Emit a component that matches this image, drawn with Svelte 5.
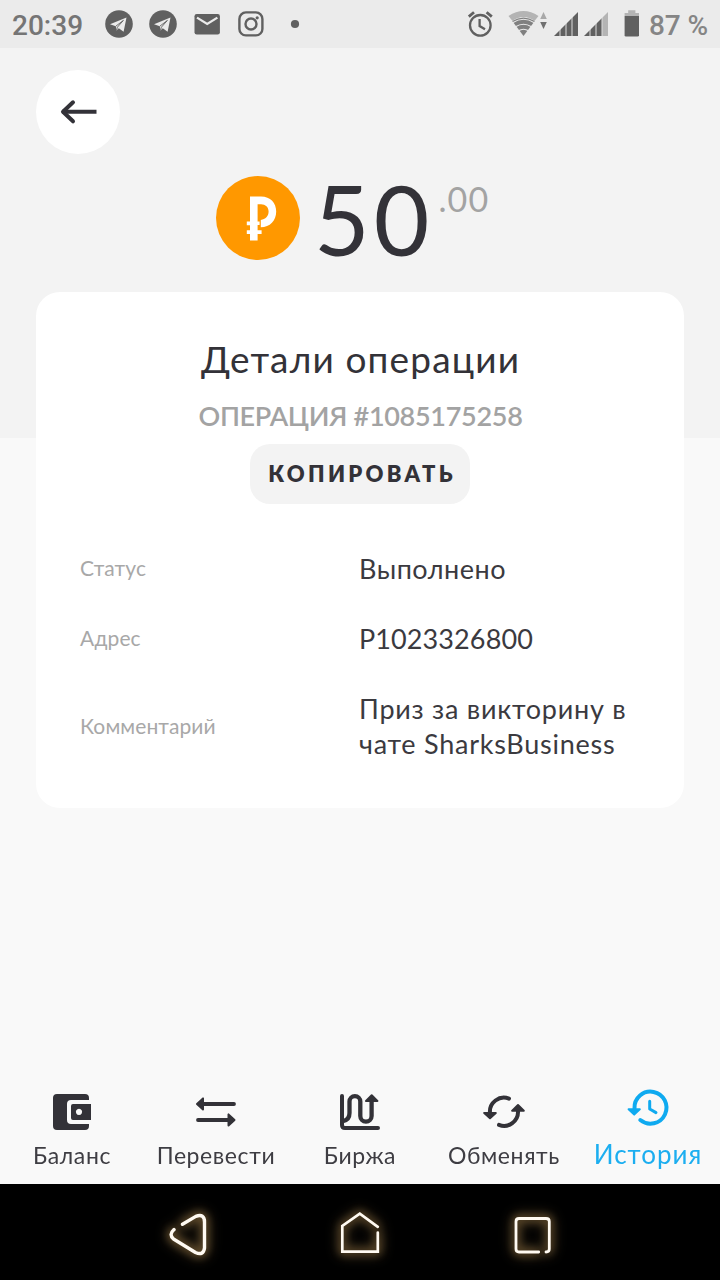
<script lang="ts">
	type Row = { label: string; value: string[]; spacing: number };

	const rows: Row[] = [
		{ label: 'Статус', value: ['Выполнено'], spacing: 0.5 },
		{ label: 'Адрес', value: ['P1023326800'], spacing: 0.1 },
		{ label: 'Комментарий', value: ['Приз за викторину в', 'чате SharksBusiness'], spacing: 0.75 }
	];

	const tabs = [
		{ id: 'balance', title: 'Баланс' },
		{ id: 'transfer', title: 'Перевести' },
		{ id: 'market', title: 'Биржа' },
		{ id: 'exchange', title: 'Обменять' },
		{ id: 'history', title: 'История' }
	];

	let active = 'history';
</script>

<div class="screen">
	<div class="status-bar">
		<span class="time">20:39</span>
		<div class="notifications">
			{#each [0, 1] as i (i)}
				<svg width="28" height="28" viewBox="0 0 28 28">
					<circle cx="14" cy="14" r="13.8" fill="#606060" />
					<path d="M5 14.3 L21.5 7.4 L18.6 21.7 L13.8 18.2 L11.5 20.4 L10.8 16.2 Z" fill="#ebebeb" />
					<path d="M10.8 16.2 L18.4 10.4 L12.4 17.2 L11.6 20" fill="none" stroke="#606060" stroke-width="0.9" />
				</svg>
			{/each}
			<svg width="28" height="28" viewBox="0 0 28 28">
				<rect x="1.5" y="4" width="25.4" height="20.4" rx="2.2" fill="#606060" />
				<path d="M4 7.6 L14.2 14 L24.4 7.6" fill="none" stroke="#ebebeb" stroke-width="2.3" />
			</svg>
			<svg width="28" height="28" viewBox="0 0 28 28">
				<rect x="2.4" y="2.4" width="23" height="23" rx="6.5" fill="none" stroke="#606060" stroke-width="2.4" />
				<circle cx="14" cy="14" r="5.5" fill="none" stroke="#606060" stroke-width="2.4" />
				<circle cx="20.2" cy="7.8" r="1.6" fill="#606060" />
			</svg>
			<svg width="28" height="28" viewBox="0 0 28 28">
				<circle cx="14" cy="14" r="4.1" fill="#606060" />
			</svg>
		</div>
		<div class="indicators">
			<svg width="174" height="30" viewBox="467 9 174 30">
				<g fill="none" stroke="#606060" stroke-width="2.3">
					<circle cx="480.3" cy="25.3" r="10.3" />
					<path d="M479.6 19 V26 L485 29.2" />
					<path d="M468.8 16.6 L474 12.2 M486.6 12.2 L491.8 16.6" stroke-width="2.8" />
				</g>
				<path d="M508.5 16 Q523.5 6 538.5 16 L534.7 20.8 Q523.5 13 512.3 20.8 Z" fill="#b4b4b4" />
				<path d="M512.2 21 Q523.5 13.8 534.8 21 L523.5 36 Z" fill="#808080" />
				<path d="M512.6 22.8 Q523.5 15.8 534.4 22.8 M515.5 26.8 Q523.5 21.8 531.5 26.8 M518.4 30.8 Q523.5 27.6 528.6 30.8" fill="none" stroke="#ebebeb" stroke-width="1.1" />
				<path d="M540.2 19 L543.5 12 L546.8 19 Z" fill="#a8a8a8" />
				<path d="M540.2 22 L543.5 29 L546.8 22 Z" fill="#707070" />
				<path d="M554 36 L578 12 V36 Z" fill="#606060" />
				<path d="M560 12 V36 M566 12 V36 M572 12 V36" stroke="#ebebeb" stroke-width="0.9" />
				<path d="M584 36 L602.5 17.5 V36 Z" fill="#606060" />
				<path d="M602.5 17.5 L608 12 V36 H602.5 Z" fill="#b4b4b4" />
				<path d="M590 12 V36 M596 12 V36 M602 12 V36" stroke="#ebebeb" stroke-width="0.9" />
				<path d="M624.6 16 V13 H628.2 V10.3 H635.4 V13 H639 V16 Z" fill="#b4b4b4" />
				<path d="M624.6 16 H639 V35.2 Q639 36.6 637.6 36.6 H626 Q624.6 36.6 624.6 35.2 Z" fill="#606060" />
			</svg>
			<span class="battery">87 %</span>
		</div>
	</div>

	<header>
		<button class="back" aria-label="Назад">
			<svg width="40" height="28" viewBox="0 0 40 28" fill="none" stroke="#333238" stroke-width="4">
				<path d="M4 13.8 H38.5" />
				<path d="M15 4.3 L5 13.8 L15 23.3" stroke-linecap="round" stroke-linejoin="round" />
			</svg>
		</button>
		<div class="amount">
			<svg class="coin" width="84" height="84" viewBox="0 0 84 84">
				<circle cx="42" cy="42" r="42" fill="#ff9800" />
				<path
					d="M34 20.5 H45 C54.5 20.5 60.2 27 60.2 35.5 C60.2 44.5 54 51.3 44.8 51.3 V44 C49.5 43.5 52.6 40.2 52.6 35.6 C52.6 31 49.5 28.2 45 28.2 H41.6 V45.5 H43.6 V49 H41.6 V54.2 H45.6 V57.9 H41.6 V64.6 H34 V57.9 H30.8 V54.2 H34 V49.2 H30.8 V45.5 H34 Z"
					fill="#fff"
				/>
			</svg>
			<span class="whole">50</span>
			<span class="cents">.00</span>
		</div>
	</header>

	<main>
		<section class="card">
			<h1>Детали операции</h1>
			<p class="number">ОПЕРАЦИЯ #1085175258</p>
			<button class="copy">КОПИРОВАТЬ</button>
			<dl>
				{#each rows as row}
					<div class="row">
						<dt>{row.label}</dt>
						<dd style="letter-spacing: {row.spacing}px">
							{#each row.value as line}
								<div>{line}</div>
							{/each}
						</dd>
					</div>
				{/each}
			</dl>
		</section>
	</main>

	<nav class="tabs">
		{#each tabs as tab}
			<button class="tab" class:active={tab.id === active} on:click={() => (active = tab.id)}>
				<svg
					width="60"
					height="50"
					viewBox="0 0 60 50"
					fill="none"
					stroke="currentColor"
					stroke-width="4"
					stroke-linecap="round"
					stroke-linejoin="round"
				>
					{#if tab.id === 'balance'}
						<g stroke="none" fill="currentColor">
							<path d="M15 8 H43 Q47 8 47 12 V14 H29 Q25 14 25 18 V34 Q25 38 29 38 H47 V40 Q47 44 43 44 H15 Q11 44 11 40 V12 Q11 8 15 8 Z" />
							<path
								fill-rule="evenodd"
								d="M31 18 H49 V34 H31 Q29 34 29 32 V20 Q29 18 31 18 Z M37 22.8 a3.1 3.1 0 1 0 0.01 0 Z"
							/>
						</g>
					{:else if tab.id === 'transfer'}
						<path d="M15 18 H48 M12 34 H44" stroke-width="3.8" />
						<path d="M11 18 L17 12.4 V23.6 Z M48.5 34 L42.5 28.4 V39.6 Z" fill="currentColor" stroke-width="2" />
					{:else if tab.id === 'market'}
						<path d="M12 10 V39 Q12 42 15 42 H48" />
						<path d="M13 35 Q19.5 34 19.5 27 V15.5 a5.4 5.4 0 0 1 10.8 0 V30 a5.6 5.6 0 0 0 11.3 0 V15" stroke-width="4.3" />
						<path d="M41.7 9.2 L36 15 H47.4 Z" fill="currentColor" stroke-width="2" />
					{:else if tab.id === 'exchange'}
						<path d="M16 27 A14 14 0 0 1 35 12.6 M25 38.9 A14 14 0 0 0 44 25" />
						<path d="M16 32.2 L10.2 27 H21.8 Z M44 19 L38.2 24.8 H49.8 Z" fill="currentColor" stroke-width="2" />
					{:else}
						<path d="M16.5 22.5 A16 16 0 1 1 22.3 34" />
						<path d="M16.2 28.6 L10.6 23.3 H21.8 Z" fill="currentColor" stroke-width="2" />
						<path d="M31.7 15.2 V23 L38 26.6" stroke-width="3" />
					{/if}
				</svg>
				<span>{tab.title}</span>
			</button>
		{/each}
	</nav>

	<div class="system-bar">
		<svg width="80" height="80" viewBox="148 1194 80 80">
			<path
				d="M182.5 1224.3 L195.8 1216.4 Q204.5 1213.2 204.5 1222 V1248 Q203.5 1256 195.5 1252.5 L173.5 1239 Q168.5 1234.5 174 1229.6"
				stroke-width="3.4"
			/>
		</svg>
		<svg width="80" height="80" viewBox="320 1194 80 80">
			<path d="M377.8 1226.8 L359.8 1213.6 L342.3 1226 V1251.6 H377.8 V1232.6" stroke-width="2.7" stroke-linejoin="miter" />
		</svg>
		<svg width="80" height="80" viewBox="492 1194 80 80">
			<path
				d="M538.7 1252 H519 Q516 1252 516 1249 V1221.5 Q516 1218.5 519 1218.5 H546 Q549.3 1218.5 549.3 1221.5 V1249 Q549.3 1252 546 1252"
				stroke-width="2.8"
			/>
		</svg>
	</div>
</div>

<style>
	:global(body) {
		margin: 0;
	}

	.screen {
		display: flex;
		flex-direction: column;
		width: 720px;
		height: 1280px;
		overflow: hidden;
		background: linear-gradient(#f3f3f3 438px, #f9f9f9 438px);
		color: #333238;
		font-family: Lato, 'Open Sans', sans-serif;
	}

	svg {
		display: block;
		flex: none;
	}

	button {
		border: 0;
		padding: 0;
		color: inherit;
		font-family: inherit;
	}

	.status-bar {
		display: flex;
		align-items: center;
		height: 48px;
		padding: 0 12px;
		background: #ebebeb;
		font-family: Roboto, sans-serif;
		font-size: 28px;
		font-weight: 500;
		color: #757575;
	}

	.time {
		width: 93px;
		padding-top: 2px;
	}

	.notifications {
		display: flex;
		gap: 16px;
	}

	.indicators {
		display: flex;
		align-items: center;
		margin-left: auto;
	}

	.battery {
		padding: 2px 0 0 8px;
		font-weight: 500;
		color: #858585;
		letter-spacing: -0.1px;
		white-space: nowrap;
	}

	header {
		height: 244px;
		box-sizing: border-box;
		padding-top: 22px;
	}

	.back {
		display: flex;
		align-items: center;
		justify-content: center;
		width: 84px;
		height: 84px;
		margin-left: 36px;
		border-radius: 50%;
		background: #fff;
	}

	.amount {
		display: flex;
		align-items: flex-start;
		margin: 17px 0 0 216px;
		line-height: 1;
	}

	.coin {
		margin-top: 5px;
	}

	.whole {
		margin-left: 14px;
		font-size: 96px;
		letter-spacing: 4px;
	}

	.cents {
		margin: 11px 0 0 5px;
		font-size: 34px;
		letter-spacing: 1.2px;
		color: #a3a3a3;
	}

	.card {
		display: flex;
		flex-direction: column;
		align-items: center;
		height: 516px;
		box-sizing: border-box;
		margin: 0 36px;
		padding: 48px 44px 0;
		border-radius: 24px;
		background: #fff;
	}

	h1 {
		margin: 0 0 0 1px;
		font-size: 37px;
		font-weight: 400;
		line-height: 37px;
		letter-spacing: 1.15px;
	}

	.number {
		margin: 25px 0 15px 1px;
		font-size: 27px;
		font-weight: 600;
		line-height: 27px;
		letter-spacing: -0.3px;
		color: #a3a3a3;
	}

	.copy {
		width: 220px;
		height: 60px;
		padding: 0 0 2px 4px;
		border-radius: 20px;
		background: #f3f3f3;
		font-size: 22px;
		font-weight: 800;
		letter-spacing: 3.3px;
	}

	dl {
		display: flex;
		flex-direction: column;
		gap: 35px;
		align-self: stretch;
		margin: 46px 0 0;
	}

	.row {
		display: flex;
		align-items: center;
	}

	dt {
		width: 280px;
		font-size: 21px;
		letter-spacing: 0.1px;
		color: #a8a8a8;
	}

	dd {
		margin: 1px 0 -1px -1px;
		font-size: 27px;
		line-height: 35px;
		color: #3b3a3f;
		white-space: nowrap;
	}

	.tabs {
		display: flex;
		height: 98px;
		margin-top: auto;
	}

	.tab {
		display: flex;
		flex: 1;
		flex-direction: column;
		align-items: center;
		background: none;
		font-size: 23px;
		line-height: 23px;
		letter-spacing: 0.6px;
	}

	.tab span {
		margin-top: 8px;
		opacity: 0.94;
	}

	.tab.active {
		color: #0faaf0;
		font-size: 26px;
		line-height: 26px;
		letter-spacing: 1px;
	}

	.tab.active span {
		margin-top: 5px;
	}

	.system-bar {
		display: flex;
		align-items: center;
		justify-content: center;
		gap: 92px;
		height: 96px;
		padding-top: 4px;
		box-sizing: border-box;
		background: #000;
	}

	.system-bar svg {
		overflow: visible;
		fill: none;
		stroke: #fffaf2;
		stroke-linecap: round;
		stroke-linejoin: round;
		filter: drop-shadow(0 0 4px #8a6c3e) drop-shadow(0 0 6px #7a6038);
	}
</style>
